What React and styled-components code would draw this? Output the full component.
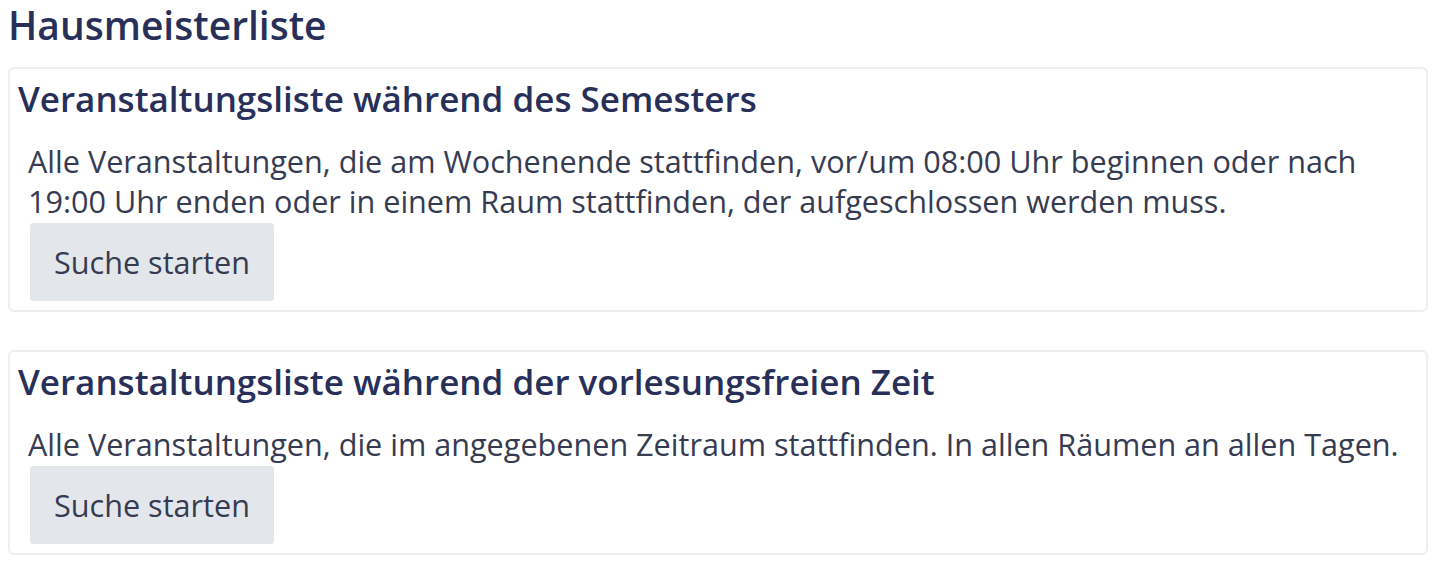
import styled, { createGlobalStyle } from "styled-components";

const GlobalStyle = createGlobalStyle`
  body {
    margin: 0;
    background: #ffffff;
    font-family: "Open Sans", "Noto Sans", sans-serif;
  }
`;

const Page = styled.div`
  padding: 3px 12px 8px 8px;
  display: flex;
  flex-direction: column;
  gap: 38px;
`;

const Title = styled.h1`
  margin: 0 0 -17px 0;
  font-size: 39px;
  font-weight: 600;
  line-height: 43px;
  color: #28305a;
`;

const Card = styled.section`
  border: 2px solid #eceef2;
  border-radius: 6px;
  padding: 6px 10px 9px 8px;
  display: flex;
  flex-direction: column;
`;

const CardTitle = styled.h2`
  margin: 0;
  font-size: 35px;
  font-weight: 600;
  line-height: 48px;
  color: #28305a;
`;

const Body = styled.div`
  padding: 18px 0 0 10px;
  display: flex;
  flex-direction: column;
  align-items: flex-start;
`;

const Text = styled.p`
  margin: 0;
  font-size: 30.6px;
  line-height: 40px;
  color: #363b52;
`;

const Button = styled.button`
  margin: 2px 0 0 2px;
  height: 78px;
  padding: 0 24px;
  border: none;
  border-radius: 3px;
  background: #e3e7eb;
  font-family: inherit;
  font-size: 30.6px;
  color: #363b52;
  cursor: pointer;
`;

const lists = [
  {
    title: "Veranstaltungsliste während des Semesters",
    text: "Alle Veranstaltungen, die am Wochenende stattfinden, vor/um 08:00 Uhr beginnen oder nach 19:00 Uhr enden oder in einem Raum stattfinden, der aufgeschlossen werden muss.",
  },
  {
    title: "Veranstaltungsliste während der vorlesungsfreien Zeit",
    text: "Alle Veranstaltungen, die im angegebenen Zeitraum stattfinden. In allen Räumen an allen Tagen.",
  },
];

const App = () => {
  return (
    <>
      <GlobalStyle />
      <Page>
        <Title>Hausmeisterliste</Title>
        {lists.map((l) => (
          <Card key={l.title}>
            <CardTitle>{l.title}</CardTitle>
            <Body>
              <Text>{l.text}</Text>
              <Button>Suche starten</Button>
            </Body>
          </Card>
        ))}
      </Page>
    </>
  );
};

export default App;
